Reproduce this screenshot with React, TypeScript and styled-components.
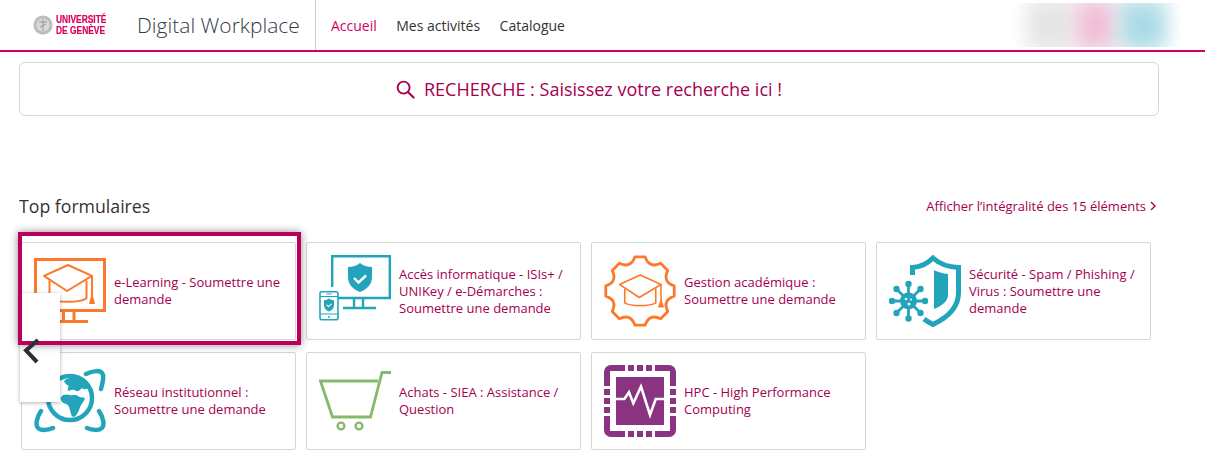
import styled, { createGlobalStyle } from 'styled-components'

const ORANGE = '#fd782b'
const TEAL = '#22a5bb'
const GREEN = '#85ba6a'
const PURPLE = '#8a3380'

const GlobalStyle = createGlobalStyle`
  html, body {
    margin: 0;
    padding: 0;
    background: #fff;
    font-family: 'Open Sans', sans-serif;
    overflow: hidden;
  }
`

const Cap = ({ x, y, w, h, bodyW, bodyH, strokeWidth }: { x: number; y: number; w: number; h: number; bodyW: number; bodyH: number; strokeWidth: number }) => {
  const cx = x + w / 2
  const bodyL = cx - bodyW / 2
  const bodyR = cx + bodyW / 2
  return (
    <g fill="none" stroke={ORANGE} strokeWidth={strokeWidth} strokeLinejoin="round">
      <path d={`M${cx} ${y} L${x + w} ${y + h * 0.42} L${cx - 1} ${y + h} L${x} ${y + h * 0.42} Z`} />
      <path d={`M${bodyL} ${y + h * 0.6} V${y + h + bodyH * 0.6} C${bodyL + 6} ${y + h + bodyH} ${bodyR - 6} ${y + h + bodyH} ${bodyR} ${y + h + bodyH * 0.6} V${y + h * 0.6}`} />
      <path d={`M${x + w} ${y + h * 0.42} V${y + h + bodyH * 0.4}`} />
      <path d={`M${x + w} ${y + h + bodyH * 0.3} L${x + w + 2.500} ${y + h + bodyH + 0.500} H${x + w - 2.500} Z`} fill={ORANGE} strokeWidth={1} />
    </g>
  )
}

const LearningIcon = () => (
  <Svg viewBox="0 0 72 72">
    <rect x="1.5" y="4.5" width="69" height="51" fill="none" stroke={ORANGE} strokeWidth="3" />
    <path d="M29.5 56v11M40 56v11M18 66.5h36" fill="none" stroke={ORANGE} strokeWidth="3" />
    <Cap x={10} y={10} w={48} h={26} bodyW={37} bodyH={12} strokeWidth={2} />
  </Svg>
)

const AccessIcon = () => (
  <Svg viewBox="0 0 72 72">
    <path d="M13.2 32V1.2H70.8V43H19" fill="none" stroke={TEAL} strokeWidth="2.4" />
    <path d="M35 44v9M44 44v9M24 53h33" fill="none" stroke={TEAL} strokeWidth="2.4" />
    <path d="M41 8c3 2.5 7 4 12 4v10c0 7-4.500 12-12 15-7.500-3-12-8-12-15V12c5 0 9-1.500 12-4z" fill={TEAL} />
    <path d="M35 23l4.500 4.500 7.500-7" fill="none" stroke="#fff" strokeWidth="2.4" />
    <rect x="1" y="36.800" width="18" height="28" rx="2" fill="#fff" stroke={TEAL} strokeWidth="1.600" />
    <path d="M1 41.500h18M1 59h18" fill="none" stroke={TEAL} strokeWidth="1.200" />
    <path d="M10 43.500c1.500 1.200 3.200 1.700 5 1.700v5c0 3-2 5-5 6.300-3-1.300-5-3.300-5-6.300v-5c1.800 0 3.500-.5 5-1.700z" fill={TEAL} />
    <path d="M7.700 49.800l1.800 1.800 3-2.800" fill="none" stroke="#fff" strokeWidth="1.100" />
    <circle cx="10" cy="62" r="1" fill={TEAL} />
    <path d="M7.500 39h5" stroke={TEAL} strokeWidth="1" />
  </Svg>
)

// 8-toothed wheel, first tooth pointing up
const gearPath = (() => {
  const tip = 34.6
  const root = 24
  const half = 8.5
  const pt = (deg: number, r: number) => {
    const a = (deg * Math.PI) / 180
    return `${(36 + r * Math.cos(a)).toFixed(2)} ${(36 + r * Math.sin(a)).toFixed(2)}`
  }
  let d = `M${pt(-90 - half, tip)} `
  for (let i = 0; i < 8; i++) {
    const c = -90 + i * 45
    d += `L${pt(c + half, tip)} Q${pt(c + 22.5, root)} ${pt(c + 45 - half, tip)} `
  }
  return d + 'Z'
})()

const GestionIcon = () => (
  <Svg viewBox="0 0 72 72">
    <path d={gearPath} fill="none" stroke={ORANGE} strokeWidth="2.800" strokeLinejoin="round" />
    <Cap x={15.5} y={20} w={41.500} h={22.500} bodyW={31} bodyH={9} strokeWidth={1.600} />
  </Svg>
)

const SecurityIcon = () => (
  <Svg viewBox="0 0 72 72">
    <path d="M23.500 20V12.500C31 12 38 9 44 3c6 5.500 13 9 25.500 9.500V38c0 14-10 24-25.500 31.500-3.500-1.800-6.500-3.500-9-5.500" fill="none" stroke={TEAL} strokeWidth="5" />
    <path d="M45 15c4 2 8 3.500 14 4v21c0 6-5.500 10.500-14 14z" fill={TEAL} />
    <g stroke={TEAL} strokeWidth="2.800">
      <path d="M19.500 28v36M1.500 46h36M7 33.500l25 25M32 33.500l-25 25" />
    </g>
    <g fill={TEAL}>
      <circle cx="19.500" cy="29" r="3.200" />
      <circle cx="19.500" cy="63.500" r="3.200" />
      <circle cx="3" cy="46" r="3.200" />
      <circle cx="36" cy="46" r="3.200" />
      <circle cx="7.500" cy="34" r="3.200" />
      <circle cx="31.500" cy="34" r="3.200" />
      <circle cx="7.500" cy="58" r="3.200" />
      <circle cx="31.500" cy="58" r="3.200" />
      <circle cx="19.500" cy="46" r="8.500" />
    </g>
    <g fill="#fff">
      <circle cx="17" cy="44" r="1.300" />
      <circle cx="22" cy="44.500" r="1" />
      <circle cx="20" cy="49" r="1.500" />
    </g>
  </Svg>
)

const NetworkIcon = () => (
  <Svg viewBox="0 0 72 72">
    <g fill="none" stroke={TEAL} strokeWidth="4.500" strokeLinecap="round">
      <path d="M52 9c6-3 15-5 17 1 1 4-1 10-2 14" />
      <path d="M65 46c4 6 6 14 3 17-3 3-10 2-15 0" />
      <path d="M7 46c-4 6-6 14-3 17 3 3 10 2 15 0" />
      <path d="M20 9C14 6 5 4 3 10c-1 4 1 10 2 14" />
    </g>
    <circle cx="36" cy="33" r="22" fill="none" stroke={TEAL} strokeWidth="4.500" />
    <path d="M27 32c2-3 6-3 9-2 3 1 5-1 8 1 2 2 5 1 7 2-1 4-4 6-5 9-1 4-3 8-6 10-3 0-3-4-4-7-1-3-1-5-4-6-3-1-6-3-5-7z" fill={TEAL} />
    <path d="M30 16c2-2 4-3 7-3 4-1 8 0 11 2 2 2 5 4 7 8-3 1-5 2-7 0-2 2-4 4-6 3-2-2-5-1-7 0-2-1-1-4 0-5-2-1-4-2-5-5z" fill={TEAL} />
  </Svg>
)

const CartIcon = () => (
  <Svg viewBox="0 0 72 72">
    <path d="M72 7.500H63L51.500 52H13.500L1.500 16H59" fill="none" stroke={GREEN} strokeWidth="2.800" />
    <circle cx="22" cy="61" r="3.400" fill="none" stroke={GREEN} strokeWidth="2.400" />
    <circle cx="40" cy="61" r="3.400" fill="none" stroke={GREEN} strokeWidth="2.400" />
  </Svg>
)

const HpcIcon = () => {
  const pins = [24, 33, 42]
  return (
    <Svg viewBox="0 0 72 72">
      <g fill={PURPLE}>
        <path d="M21 0H7a7 7 0 0 0-7 7v14h6V6h15z" />
        <path d="M51 0h14a7 7 0 0 1 7 7v14h-6V6H51z" />
        <path d="M21 72H7a7 7 0 0 1-7-7V51h6v15h15z" />
        <path d="M51 72h14a7 7 0 0 0 7-7V51h-6v15H51z" />
        {pins.map(p => (
          <g key={p}>
            <rect x={p} y="0" width="6" height="6" />
            <rect x={p} y="66" width="6" height="6" />
            <rect x="0" y={p} width="6" height="6" />
            <rect x="66" y={p} width="6" height="6" />
          </g>
        ))}
        <rect x="12" y="12" width="48" height="48" />
      </g>
      <path d="M12 34H20.300L25 27.300 29.300 38.300 37 21.700 46 50 51.700 34H60" fill="none" stroke="#fff" strokeWidth="2.600" />
    </Svg>
  )
}

const forms = [
  { id: 'learning', label: 'e-Learning - Soumettre une demande', Icon: LearningIcon, focused: true },
  { id: 'access', label: 'Accès informatique - ISIs+ / UNIKey / e-Démarches : Soumettre une demande', Icon: AccessIcon },
  { id: 'gestion', label: 'Gestion académique : Soumettre une demande', Icon: GestionIcon },
  { id: 'security', label: 'Sécurité - Spam / Phishing / Virus : Soumettre une demande', Icon: SecurityIcon },
  { id: 'network', label: 'Réseau institutionnel : Soumettre une demande', Icon: NetworkIcon },
  { id: 'cart', label: 'Achats - SIEA : Assistance / Question', Icon: CartIcon },
  { id: 'hpc', label: 'HPC - High Performance Computing', Icon: HpcIcon },
]

export default function App() {
  return (
    <Page>
      <GlobalStyle />
      <Header>
        <Brand>
          <Seal viewBox="0 0 20 20">
            <circle cx="10" cy="10" r="9.500" fill="#b4b4b4" />
            <circle cx="10" cy="10" r="6.800" fill="#d8d8d8" />
            <circle cx="10" cy="10" r="8.200" fill="none" stroke="#e4e4e4" strokeWidth=".7" strokeDasharray="1 1" />
            <path d="M10 4v12M6 7h8M7 12l6-3" stroke="#999" strokeWidth="1" fill="none" />
          </Seal>
          <LogoText>
            UNIVERSITÉ
            <br />
            DE GENÈVE
          </LogoText>
          <AppName>Digital Workplace</AppName>
        </Brand>
        <Nav>
          <NavLink $active>Accueil</NavLink>
          <NavLink>Mes activités</NavLink>
          <NavLink>Catalogue</NavLink>
        </Nav>
        <UserBlur>
          <Blob $color="#e4e4e4" $width={40} />
          <Blob $color="#f0bcd6" $width={36} />
          <Blob $color="#a8dae5" $width={44} />
        </UserBlur>
      </Header>
      <Main>
        <SearchBox>
          <SearchGlyph viewBox="0 0 20 20">
            <circle cx="8" cy="8" r="6.300" fill="none" stroke="currentColor" strokeWidth="2" />
            <path d="M12.800 12.800L18.500 18.500" stroke="currentColor" strokeWidth="2.200" strokeLinecap="round" />
          </SearchGlyph>
          RECHERCHE : Saisissez votre recherche ici !
        </SearchBox>
        <SectionHead>
          <SectionTitle>Top formulaires</SectionTitle>
          <AllLink>
            Afficher l’intégralité des 15 éléments
            <LinkArrow viewBox="0 0 6 10">
              <path d="M1 1l4 4-4 4" fill="none" stroke="currentColor" strokeWidth="1.400" />
            </LinkArrow>
          </AllLink>
        </SectionHead>
        <Grid>
          {forms.map(({ id, label, Icon, focused }) => (
            <Card key={id}>
              <Icon />
              <CardLabel>{label}</CardLabel>
              {focused && <FocusRing />}
            </Card>
          ))}
        </Grid>
      </Main>
      <PrevPanel />
      <PrevChevron viewBox="0 0 18 26">
        <path d="M15 2L3 12.500 14 24" fill="none" stroke="#2b2f36" strokeWidth="4" />
      </PrevChevron>
    </Page>
  )
}

const Page = styled.div`
  position: relative;
  width: 1205px;
  height: 457px;
  overflow: hidden;
`

const Header = styled.header`
  display: flex;
  align-items: stretch;
  height: 50px;
  border-bottom: 2px solid #d0005f;
`

const Brand = styled.div`
  display: flex;
  align-items: center;
  width: 316px;
  box-sizing: border-box;
  padding-left: 33px;
  border-right: 1px solid #ccc;
`

const Seal = styled.svg`
  width: 20px;
  height: 20px;
  flex: none;
  margin-right: 3px;
`

const LogoText = styled.div`
  width: 81px;
  font-family: 'Liberation Sans', Arial, sans-serif;
  font-size: 10px;
  font-weight: 700;
  line-height: 11px;
  color: #d6005f;
  -webkit-text-stroke: 0.2px #d6005f;
  transform: scaleX(0.84);
  transform-origin: left center;
`

const AppName = styled.div`
  flex: none;
  font-size: 21px;
  font-weight: 300;
  color: #333c48;
`

const Nav = styled.nav`
  display: flex;
  align-items: center;
  gap: 19.5px;
  padding-left: 15px;
  flex: 1;
`

const NavLink = styled.a<{ $active?: boolean }>`
  font-size: 14px;
  color: ${p => (p.$active ? '#d0005f' : '#333')};
`

const UserBlur = styled.div`
  display: flex;
  align-items: center;
  justify-content: center;
  gap: 8px;
  align-self: flex-start;
  width: 166px;
  height: 44px;
  margin: 3px 25px 0 0;
  overflow: hidden;
  background: linear-gradient(90deg, #fff, #f3f3f3 25%, #f4f0f2 50%, #eef6f8 80%, #fff);
`

const Blob = styled.div<{ $color: string; $width: number }>`
  flex: none;
  width: ${p => p.$width}px;
  height: 46px;
  background: ${p => p.$color};
  filter: blur(10px);
`

const Main = styled.main`
  padding: 10px 0 0 19px;
`

const SearchBox = styled.div`
  display: flex;
  align-items: center;
  justify-content: center;
  gap: 9px;
  width: 1140px;
  height: 54px;
  box-sizing: border-box;
  border: 1px solid #d6d6d6;
  border-radius: 6px;
  font-size: 18px;
  color: #a50050;
`

const SearchGlyph = styled.svg`
  width: 19px;
  height: 19px;
`

const SectionHead = styled.div`
  display: flex;
  align-items: center;
  justify-content: space-between;
  width: 1137px;
  margin-top: 77px;
  height: 26px;
`

const SectionTitle = styled.h2`
  margin: 0;
  font-size: 17.7px;
  font-weight: 400;
  color: #333;
`

const AllLink = styled.a`
  display: flex;
  align-items: center;
  gap: 4px;
  font-size: 13px;
  color: #a50050;
`

const LinkArrow = styled.svg`
  width: 6px;
  height: 10px;
`

const Grid = styled.div`
  display: grid;
  grid-template-columns: repeat(4, 275px);
  grid-auto-rows: 98px;
  gap: 12px 10px;
  margin: 23px 0 0 2px;
`

const Card = styled.div`
  position: relative;
  display: flex;
  align-items: center;
  gap: 8px;
  box-sizing: border-box;
  padding: 0 12px;
  border: 1px solid #d6d6d6;
  border-radius: 2px;
`

const Svg = styled.svg`
  width: 72px;
  height: 72px;
  flex: none;
`

const CardLabel = styled.span`
  font-size: 13px;
  line-height: 17px;
  color: #a50050;
`

const FocusRing = styled.div`
  position: absolute;
  z-index: 2;
  inset: -11px -6px -6px -4px;
  border: 4px solid #bb0059;
  box-shadow: 0 0 8px rgba(0, 0, 0, 0.45);
`

const PrevPanel = styled.div`
  position: absolute;
  z-index: 1;
  left: 20px;
  top: 293px;
  width: 40px;
  height: 109px;
  background: #fff;
  box-shadow: 0 1px 4px rgba(0, 0, 0, 0.3);
`

const PrevChevron = styled.svg`
  position: absolute;
  z-index: 3;
  left: 23px;
  top: 338px;
  width: 18px;
  height: 26px;
`
